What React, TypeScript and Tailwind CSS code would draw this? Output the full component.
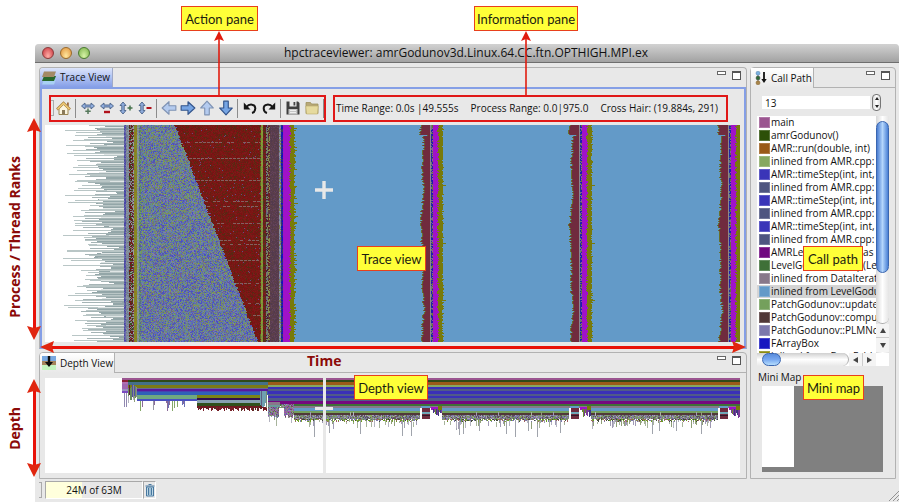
import { useMemo, type ReactNode } from "react";

type Layers = Map<string, string[]>;

const SKY = "#639ac8";
const MAROON = "#702b3e";
const PURPLE = "#a012c8";
const OLIVE = "#787a0a";

function makeRandom(seed: number) {
  let s = seed;
  return () => {
    s = (s * 1664525 + 1013904223) % 4294967296;
    return s / 4294967296;
  };
}

function painter() {
  const order: { fill: string; d: string[] }[] = [];
  const groups: Layers = new Map();
  const rect = (fill: string, x: number, y: number, w: number, h: number) => {
    if (w <= 0 || h <= 0) return;
    let d = groups.get(fill);
    if (!d) {
      d = [];
      groups.set(fill, d);
      order.push({ fill, d });
    }
    d.push(`M${x} ${y}h${w}v${h}h${-w}z`);
  };
  const flush = () => groups.clear();
  return { order, rect, flush };
}

function traceLayers() {
  const rnd = makeRandom(7);
  const pick = (c: string[]) => c[Math.floor(rnd() * c.length)];
  const { order, rect, flush } = painter();
  const H = 217;

  // idle spikes before start-up
  for (let y = 0; y < H; y++) {
    const group = Math.abs(((y + 4) % 18) - 9) * 2;
    const start = 46 + group + Math.round(rnd() * 10);
    rect("#93a6a8", start, y, 81 - start, 1);
    if (y % 5 === 0 || y % 7 === 0) rect("#b9c6c6", 18 + Math.round(rnd() * 28), y, 62, 1);
    else if (y % 3 === 0) rect("#a5b4b5", 36 + Math.round(rnd() * 20), y, 40, 1);
  }
  flush();
  for (let y = 2; y < H; y += 9) rect("#dfe5e5", 52 + Math.round(rnd() * 14), y, 27, 1);
  flush();

  // start-up stripes
  const strips: [number, number, string[]][] = [
    [79, 2, ["#4a45a8", "#5a58a0", "#6a6ab0"]],
    [81, 3, ["#7d8a98", "#8a949c", "#6f7a90"]],
    [84, 4, ["#5c1a22", "#38501c", "#7a6a70", "#7a1818", "#8a949c"]],
    [88, 1, ["#9a9aa0", "#6a3a50"]],
    [89, 3, ["#8a8a1c", "#7a8a30", "#8f7a20"]],
    [92, 2, ["#8a989c", "#7c8c90"]],
    [94, 2, ["#5c8a58", "#6a9a70", "#5858a0"]],
  ];
  for (const [x, w, colors] of strips)
    for (let i = 0; i < w; i++) for (let y = 0; y < H; y++) rect(pick(colors), x + i, y, 1, 1);
  flush();

  // AMR noise and the sloped solver front
  const cool = ["#4a4ec4", "#5a64c0", "#5058b4", "#5f74b0", "#66749a", "#7a7ab0", "#6a8a90", "#768f60", "#6482a0", "#74608c"];
  const green = ["#7f9c4c", "#6a9060", "#6f9a7a", "#84885a", "#5f8a98"];
  const warm = ["#7d1414", "#7d1414", "#80181a", "#781212", "#7a1a14", "#6c2014", "#542c12", "#6a1c14"];
  for (let y = 0; y < H; y++) {
    const front = Math.round(129 + (y * 83) / 217 + rnd() * 2);
    for (let x = 96; x < 215; x++) {
      if (x < front) rect(rnd() < 0.34 - y * 0.001 ? pick(green) : pick(cool), x, y, 1, 1);
      else rect(rnd() < 0.015 ? "#6a4a80" : pick(warm), x, y, 1, 1);
    }
  }
  flush();
  for (const y of [17, 33, 55, 76, 81, 98, 115, 119, 135, 158, 178, 190, 200])
    for (let x = 131 + Math.round((y * 83) / 217); x < 215; x += 4)
      if (rnd() < 0.7) rect("#846060", x, y, 3, 1);
  flush();

  const mid: [number, number, string[]][] = [
    [215, 1, ["#5a6a20", "#7a1818"]],
    [216, 2, ["#84962f", "#8a9a3c", "#7a8a40"]],
    [218, 3, ["#6a1820", "#7a1c1c", "#4a3a18"]],
    [221, 2, ["#7c8a60", "#6a6a80", "#4a2030"]],
    [223, 2, ["#6a2028", "#849048", "#5a3a40"]],
    [225, 9, ["#583c4c", "#583c4c", "#5e4048", "#523a4c", "#62425a"]],
    [234, 2, ["#8a92a0", "#707c98", "#7a7a50"]],
    [236, 2, ["#1414b4", "#2222a4", "#3a3a60"]],
  ];
  for (const [x, w, colors] of mid)
    for (let i = 0; i < w; i++) for (let y = 0; y < H; y++) rect(pick(colors), x + i, y, 1, 1);
  for (let y = 0; y < H; y++) {
    const split = 244 + Math.round(rnd() * 2);
    const end = 249 + Math.round(rnd() * rnd() * 4);
    rect(SKY, end, y, 695 - end, 1);
    rect(PURPLE, 238, y, split - 238, 1);
    rect(OLIVE, split, y, end - split, 1);
  }
  flush();

  // synchronisation bands
  for (const x0 of [384, 533, 682]) {
    for (let y = 0; y < H; y++) {
      const bulge = y < 10 ? -2 : Math.round(Math.sin(y / 9) * 0.8 + Math.sin(y / 23) * 0.8);
      const left = y === 10 ? x0 - 1 : x0 - 7 + bulge + Math.round(rnd() * 2);
      const split = x0 + 8 + Math.round(rnd() * 2);
      const end = Math.min(695, x0 + 13 + Math.round(rnd() + rnd() * rnd() * 1.6));
      rect("#66702c", left - 1, y, 1, 1);
      rect(MAROON, left, y, x0 + 1 - left, 1);
      rect("#8a8890", x0 + 1, y, 1, 1);
      rect(pick(["#1c1cae", "#2a2a9c", "#6a7a70"]), x0 + 2, y, 1, 1);
      rect(pick(["#1c1cae", "#66703a", "#8858a0"]), x0 + 3, y, 1, 1);
      rect(PURPLE, x0 + 4, y, split - x0 - 4, 1);
      rect(OLIVE, split, y, end - split, 1);
    }
    for (const y of [60, 118, 175]) rect(OLIVE, x0 + 12, y, x0 > 600 ? 1 : 5, 1);
  }
  return order;
}

function depthLayers() {
  const rnd = makeRandom(41);
  const pick = (c: string[]) => c[Math.floor(rnd() * c.length)];
  const { order, rect, flush } = painter();

  const row = (colors: [string, number, number][], x: number, w: number) =>
    colors.forEach(([c, y, h]) => rect(c, x, y, w, h));

  row([["#9b5590", 0, 2], ["#2f4a18", 2, 2]], 77, 618);
  row([["#8c1c34", 2, 2], ["#b070b0", 4, 2], ["#a068b0", 6, 5], ["#9a90c0", 11, 2], ["#7a4ac0", 13, 2]], 77, 6);
  row([["#447088", 4, 3], ["#7c7a14", 7, 3], ["#6a6a90", 10, 1], ["#5a189c", 11, 2], ["#4444b0", 13, 1], ["#3060b8", 14, 3]], 83, 140);
  row([["#70a880", 17, 4], ["#4a50c0", 21, 2]], 92, 60);
  row([["#7c8414", 17, 3], ["#30104c", 20, 2], ["#88a0b0", 22, 3], ["#30501c", 25, 3], ["#701820", 28, 2]], 152, 66);
  row([["#9a5a18", 4, 3], ["#86a860", 7, 2], ["#3a30b8", 9, 2], ["#505a88", 11, 2], ["#3a30b8", 13, 3], ["#505a88", 16, 2], ["#3a30b8", 18, 2], ["#505a88", 20, 3], ["#750880", 23, 3], ["#3f7038", 26, 2]], 223, 472);
  row([["#88788a", 28, 2], [SKY, 30, 3], ["#74a05c", 33, 2], ["#503838", 35, 2]], 249, 446);
  row([["#88788a", 24, 3], ["#6a9a98", 27, 2]], 223, 12);
  flush();

  const noise = ["#7c78ac", "#8a8498", "#6c5860", "#86a860", "#707088", "#a8a0b8", "#585060", "#74906c"];
  const tail = ["#a8b49c", "#a09ab4", "#b4b4c0", "#90a078"];
  // first phases
  for (let x = 83; x < 92; x++) {
    rect(pick(["#5a2030", "#6a8a60", "#5050a0", "#8a8a90"]), x, 6 + Math.floor(rnd() * 6), 1, 9 + Math.floor(rnd() * 5));
    if (rnd() < 0.5) rect(pick(tail), x, 18, 1, 4 + Math.floor(rnd() * 11));
  }
  for (const x of [79, 81]) rect("#9088b0", x, 15, 1, 14);
  for (let x = 92; x < 152; x++) {
    const cluster = x < 116 || (x > 120 && x < 145);
    if (cluster && rnd() < 0.36) rect(pick(["#8a6a98", "#84a868", "#6a70b8", "#9a9aa8"]), x, 23, 1, 2 + Math.floor(rnd() * 10));
  }
  for (let x = 152; x < 222; x++) {
    if (rnd() < 0.72) rect(pick(["#701820", "#782028", "#503020"]), x, 29, 1, 2 + Math.floor(rnd() * 3));
    if (x > 214) rect(pick(["#70a0b0", "#7a8a70", "#5c5c80"]), x, 13, 1, 12 + Math.floor(rnd() * 6));
  }
  for (let x = 223; x < 249; x++) {
    const top = x < 236 ? 29 : 26;
    const bottom = x > 233 && x < 239 ? 30 : 37 + Math.floor(rnd() * 4);
    for (let y = top; y < bottom; y++)
      rect(pick(["#6c5060", "#7a9a60", "#9a50b0", "#6868a8", "#8a9aa8", "#8a808c"]), x, y, 1, 1);
    if (bottom > 31 && rnd() < 0.3) rect(pick(tail), x, bottom, 1, Math.floor(rnd() * 11));
  }
  flush();

  // deepest frames and their tails
  for (let x = 249; x < 695; x++) {
    const floor = 42 + Math.floor(rnd() * 3);
    rect("#9a96a8", x, 37, 1, 4);
    for (let y = 37; y < floor; y++)
      rect(y > 40 ? pick(["#68a01c", "#80a040", "#404838", "#7c78ac", "#a06060", "#ffffff"]) : pick(noise), x, y, 1, 1);
    if (rnd() < 0.05) rect(pick(tail), x, 34, 1, 4);
    if (rnd() < 0.26) rect(pick(tail), x, floor, 1, 2 + Math.floor(rnd() * 6));
    if (rnd() < 0.05) rect("#a0a4ac", x, 42, 1, 8 + Math.floor(rnd() * 10));
  }
  flush();
  for (const x0 of [376, 525, 674]) {
    const w = Math.min(21, 695 - x0);
    rect("#ffffff", x0 - 1, 30, w + 1, 32);
    flush();
    rect("#88788a", x0, 28, w, 2);
    rect(SKY, x0, 28, 9, 2);
    rect(MAROON, x0 + 1, 30, 8, 11);
    flush();
    rect("#70a8b8", x0 + 1, 34, 8, 2);
    rect("#301828", x0 + 1, 37, 8, 1);
    rect(PURPLE, x0 + 10, 29, 9, 3);
    for (let x = x0 + 12; x < x0 + w; x++) rect(pick(["#6a8a30", "#7a3a98", "#403880"]), x, 31, 1, 3 + Math.floor(rnd() * 7));
    rect(OLIVE, x0 + 17, 28, Math.min(4, w - 17), 4);
  }
  return order;
}

function Drawing({ layers, height, label, cls }: { layers: { fill: string; d: string[] }[]; height: number; label: string; cls: string }) {
  return (
    <svg role="img" aria-label={label} viewBox={`0 0 695 ${height}`} preserveAspectRatio="none" shapeRendering="crispEdges" className={cls}>
      {layers.map((l, i) => (
        <path key={i} fill={l.fill} d={l.d.join("")} />
      ))}
    </svg>
  );
}

function Callout({ children, cls }: { children: ReactNode; cls: string }) {
  return (
    <div className={`absolute z-20 flex h-[25px] items-center justify-center whitespace-nowrap border border-[#e8401c] bg-[#ffff38] font-[Lato,sans-serif] text-[13px] leading-4 text-[#1c1c10] ${cls}`}>
      {children}
    </div>
  );
}

function UpArrow({ cls }: { cls: string }) {
  return (
    <svg viewBox="0 0 12 64" className={`absolute z-10 h-16 w-3 ${cls}`} aria-hidden="true">
      <path d="M6 8V64" stroke="#e01c10" strokeWidth="1.6" />
      <path d="M6 0L11 10L6 8L1 10Z" fill="#e01c10" />
    </svg>
  );
}

function VerticalAxis({ text, cls, textCls = "" }: { text: string; cls: string; textCls?: string }) {
  return (
    <div className={`absolute z-10 flex items-center gap-1 ${cls}`}>
      <span className={`w-4 rotate-180 text-center text-[14px] leading-4 font-bold whitespace-nowrap text-[#8b0a08] [writing-mode:vertical-rl] ${textCls}`}>{text}</span>
      <div className="flex h-full w-[14px] flex-col items-center">
        <svg viewBox="0 0 14 14" className="w-[14px] shrink-0" aria-hidden="true"><path d="M7 0L14 14L7 12L0 14Z" fill="#e0260f" /></svg>
        <div className="-my-0.5 w-[3px] flex-1 bg-[#e81208]" />
        <svg viewBox="0 0 14 14" className="w-[14px] shrink-0" aria-hidden="true"><path d="M7 14L14 0L7 2L0 0Z" fill="#e0260f" /></svg>
      </div>
    </div>
  );
}

function PaneButtons() {
  return (
    <div className="ml-auto flex items-start gap-1.5 pt-[3px] pr-[5px]">
      <button aria-label="Minimize" className="h-1 w-[9px] border border-[#666] bg-white" />
      <button aria-label="Maximize" className="h-[9px] w-[9px] border border-t-2 border-[#555] bg-white" />
    </div>
  );
}

function Arrow({ turn, pale }: { turn: string; pale?: boolean }) {
  return (
    <svg viewBox="0 0 14 14" className={`size-4 ${turn}`} aria-hidden="true">
      <path d="M1 5h6V1.5L13 7L7 12.5V9H1Z" fill={pale ? "#b4cbef" : "#76a5e4"} stroke={pale ? "#7f93b4" : "#33558c"} strokeWidth="1" strokeLinejoin="round" />
    </svg>
  );
}

function Zoom({ vertical, plus }: { vertical?: boolean; plus?: boolean }) {
  return (
    <svg viewBox="0 0 14 14" className="size-[14px]" aria-hidden="true">
      <path
        d={vertical ? "M4 1L7 4.500H5.200V9.500H7L4 13L1 9.500H2.800V4.500H1Z" : "M.5 5L4 2V4H10V2L13.500 5L10 8V6H4V8Z"}
        fill="#8facdc"
        stroke="#4a6288"
        strokeWidth=".9"
      />
      {vertical ? (
        plus ? <path d="M8.500 7H13.500M11 4.500V9.500" stroke="#46724c" strokeWidth="1.500" /> : <path d="M8.500 7H13.500" stroke="#b0121c" strokeWidth="2" />
      ) : plus ? (
        <path d="M7 7.500V13M4.300 10.300H9.700" stroke="#56785c" strokeWidth="1.500" />
      ) : (
        <path d="M4 11H10" stroke="#b0121c" strokeWidth="2.400" />
      )}
    </svg>
  );
}

function Undo({ redo }: { redo?: boolean }) {
  return (
    <svg viewBox="0 0 14 14" className={`size-[14px] ${redo ? "-scale-x-100" : ""}`} aria-hidden="true">
      <path d="M3.500 6C6 2.500 12.500 2.800 12.300 7.500C12.200 10 10.800 11.500 9 12" fill="none" stroke="#161616" strokeWidth="2" />
      <path d="M.8 1.500V8.500H7.500Z" fill="#161616" />
    </svg>
  );
}

function ToolButton({ label, children }: { label: string; children: ReactNode }) {
  return (
    <button aria-label={label} title={label} className="flex h-5 w-[19px] shrink-0 items-center justify-center">
      {children}
    </button>
  );
}

const Divider = () => <span className="mx-[2px] h-[19px] w-px shrink-0 bg-[#8c8c8c]" />;

function Toolbar() {
  return (
    <div className="relative flex h-[27px] w-[277px] shrink-0 items-center border-2 border-[#e01818] pb-px">
      <span className="h-4 w-[3px] shrink-0 border-y border-r border-[#aaa]" />
      <ToolButton label="Home">
        <svg viewBox="0 0 15 15" className="size-[15px]" aria-hidden="true">
          <path d="M3 7.500V13.500H12V7.500L7.500 3.500Z" fill="#fbf5df" stroke="#998552" />
          <path d="M1 8.500L7.500 2L14 8.500" fill="none" stroke="#a88240" strokeWidth="2.600" />
          <path d="M1.500 8.200L7.500 2.300L13.500 8.200" fill="none" stroke="#f0cc78" strokeWidth="1.600" />
          <path d="M6 9H9V13.500H6Z" fill="#8a7a5a" />
          <path d="M11 1.500H12.800V5.500L11 3.800Z" fill="#9a6a40" />
        </svg>
      </ToolButton>
      <Divider />
      <ToolButton label="Zoom in time"><Zoom plus /></ToolButton>
      <ToolButton label="Zoom out time"><Zoom /></ToolButton>
      <ToolButton label="Zoom in process"><Zoom vertical plus /></ToolButton>
      <ToolButton label="Zoom out process"><Zoom vertical /></ToolButton>
      <Divider />
      <ToolButton label="Left"><Arrow turn="rotate-180" pale /></ToolButton>
      <ToolButton label="Right"><Arrow turn="rotate-0" /></ToolButton>
      <ToolButton label="Up"><Arrow turn="-rotate-90" pale /></ToolButton>
      <ToolButton label="Down"><Arrow turn="rotate-90" /></ToolButton>
      <Divider />
      <ToolButton label="Undo"><Undo /></ToolButton>
      <ToolButton label="Redo"><Undo redo /></ToolButton>
      <Divider />
      <ToolButton label="Save">
        <svg viewBox="0 0 14 14" className="size-[14px]" aria-hidden="true">
          <path d="M.5.5H12L13.500 2V13.500H.5Z" fill="#3e3e3e" />
          <path d="M3.500 0H10.500V5.500H3.500Z" fill="#e8e8e8" />
          <path d="M7.500 1H9.300V4.500H7.500Z" fill="#444" />
          <path d="M2.500 8H11.500V13.500H2.500Z" fill="#c4c4c4" />
          <path d="M4 9.500H10M4 11.500H10" stroke="#eee" />
        </svg>
      </ToolButton>
      <ToolButton label="Open">
        <svg viewBox="0 0 14 14" className="size-[14px]" aria-hidden="true">
          <path d="M1 3V1.500H5.500L6.500 3H13V12.500H1Z" fill="#b8a878" stroke="#a0925c" strokeWidth=".8" />
          <path d="M.8 5H13.200L12.500 13H1.500Z" fill="#e6da9e" stroke="#b8aa6a" strokeWidth=".6" />
        </svg>
      </ToolButton>
      <Divider />
      <UpArrow cls="bottom-[25px] left-[162px]" />
      <Callout cls="bottom-[89px] left-[130px] w-[77px]">Action pane</Callout>
    </div>
  );
}

const FRAMES: [string, string][] = [
  ["main", "bg-[#9b5590]"],
  ["amrGodunov()", "bg-[#2d5008]"],
  ["AMR::run(double, int)", "bg-[#9a5a18]"],
  ["inlined from AMR.cpp:", "bg-[#86a860]"],
  ["AMR::timeStep(int, int,", "bg-[#3a35b8]"],
  ["inlined from AMR.cpp:", "bg-[#4e5580]"],
  ["AMR::timeStep(int, int,", "bg-[#3a35b8]"],
  ["inlined from AMR.cpp:", "bg-[#4e5580]"],
  ["AMR::timeStep(int, int,", "bg-[#3a35b8]"],
  ["inlined from AMR.cpp:", "bg-[#4e5580]"],
  ["AMRLevelPolytropGas", "bg-[#700880]"],
  ["LevelGodunov::step(Lev", "bg-[#3f7038]"],
  ["inlined from DataIterat", "bg-[#88788a]"],
  ["inlined from LevelGodu", "bg-[#639ac8]"],
  ["PatchGodunov::updateS", "bg-[#74a05c]"],
  ["PatchGodunov::comput", "bg-[#503838]"],
  ["PatchGodunov::PLMNor", "bg-[#7c78ac]"],
  ["FArrayBox", "bg-[#1818c0]"],
  ["inlined from BaseFabI", "bg-[#8a8a10]"],
];

function CallPathPane() {
  return (
    <section className="relative flex w-[146px] shrink-0 flex-col rounded-t-[4px] border border-[#b2b2b2]">
      <header className="flex h-[20px] border-b border-[#b2b2b2]">
        <h2 className="-mb-px flex w-[63px] items-center gap-1 border-r border-[#b2b2b2] bg-linear-to-b from-white to-[#e8e8e8] pl-1 text-[10px] whitespace-nowrap">
          <svg viewBox="0 0 12 14" className="h-[14px] w-3 shrink-0" aria-hidden="true">
            <path d="M3 2V12" stroke="#777" />
            <circle cx="3" cy="2.200" r="2" fill="#7ab0e0" stroke="#5580a8" strokeWidth=".5" />
            <circle cx="3" cy="7" r="2" fill="#2c6a34" stroke="#444" strokeWidth=".5" />
            <circle cx="3" cy="11.800" r="2" fill="#a88448" stroke="#80602c" strokeWidth=".5" />
            <path d="M9 1V10" stroke="#111" strokeWidth="1.800" />
            <path d="M6.300 8H11.700L9 12Z" fill="#111" />
          </svg>
          Call Path
        </h2>
        <PaneButtons />
      </header>
      <div className="flex items-center gap-0.5 pt-[6px] pl-[11px]">
        <input aria-label="Depth level" defaultValue="13" className="h-[13px] w-[108px] bg-white pl-[3px] text-[10px] leading-3 outline-none" />
        <div className="flex h-[17px] w-[9px] flex-col justify-between rounded-[4px] border border-[#777] bg-linear-to-r from-[#ddd] via-white to-[#ddd] py-[2px] text-[#222]">
          <button aria-label="Increase" className="flex justify-center"><svg viewBox="0 0 4 3" className="h-[3px] w-1"><path d="M2 0L4 3H0Z" fill="currentColor" /></svg></button>
          <button aria-label="Decrease" className="flex justify-center"><svg viewBox="0 0 4 3" className="h-[3px] w-1"><path d="M2 3L4 0H0Z" fill="currentColor" /></svg></button>
        </div>
      </div>
      <div className="mt-[5px] ml-[6px] flex h-[237px] w-[132px]">
        <ul className="flex-1 overflow-hidden bg-white">
          {FRAMES.map(([name, swatch], i) => (
            <li key={i} className={`flex h-[13px] items-center gap-px pl-0.5 text-[10px] leading-[13px] whitespace-nowrap ${i === 13 ? "bg-[#d4d4d4]" : ""}`}>
              <span className={`size-[11px] shrink-0 border border-white/20 ${swatch}`} />
              {name}
            </li>
          ))}
        </ul>
        <div className="flex w-[13px] flex-col bg-linear-to-r from-[#d8d8d8] via-white to-[#e4e4e4]">
          <div className="mt-[5px] h-[152px] rounded-full border border-[#3a66b0] bg-linear-to-r from-[#4a7cd0] via-[#b4d6fc] to-[#4a80d4]" />
          <div className="h-[51px] rounded-b-full border-b border-[#aaa]" />
          <button aria-label="Scroll up" className="flex h-[14px] items-center justify-center border-b border-[#ccc] bg-[#f4f4f4]"><svg viewBox="0 0 6 5" className="w-1.5"><path d="M3 0L6 5H0Z" fill="#444" /></svg></button>
          <button aria-label="Scroll down" className="flex h-[14px] items-center justify-center bg-[#f4f4f4]"><svg viewBox="0 0 6 5" className="w-1.5"><path d="M3 5L6 0H0Z" fill="#444" /></svg></button>
        </div>
      </div>
      <div className="ml-[6px] flex h-[13px] w-[132px] bg-white">
        <div className="flex w-[92px] rounded-r-full border-r border-[#aaa] bg-linear-to-b from-[#d0d0d0] via-white to-[#e8e8e8] pl-[5px]">
          <div className="w-[19px] rounded-full border border-[#3a66b0] bg-linear-to-b from-[#5a8cdc] via-[#78a8f0] to-[#b4dcfc]" />
        </div>
        <button aria-label="Scroll left" className="flex w-[14px] items-center justify-center border-r border-[#ccc] bg-[#f4f4f4]"><svg viewBox="0 0 5 6" className="h-1.5"><path d="M0 3L5 0V6Z" fill="#444" /></svg></button>
        <button aria-label="Scroll right" className="flex w-[13px] items-center justify-center bg-[#f4f4f4]"><svg viewBox="0 0 5 6" className="h-1.5"><path d="M5 3L0 0V6Z" fill="#444" /></svg></button>
      </div>
      <h3 className="mt-[3px] ml-[7px] text-[10px] leading-4">Mini Map</h3>
      <div className="mt-px ml-[11px] h-[86px] w-[121px] bg-[#808080]">
        <div className="h-[81px] w-8 bg-white" />
      </div>
      <Callout cls="top-[178px] right-[32px] w-[60px]">Call path</Callout>
      <Callout cls="top-[307px] right-[31px] w-[61px]">Mini map</Callout>
    </section>
  );
}

function Light({ cls, label }: { cls: string; label: string }) {
  return <button className={`size-3 rounded-full border ${cls}`} aria-label={label} />;
}

export default function App() {
  const trace = useMemo(traceLayers, []);
  const depth = useMemo(depthLayers, []);
  return (
    <main className="overflow-hidden bg-white pt-11 pr-px pl-[35px] font-['Open_Sans',sans-serif] text-[#111]">
      <div className="rounded-t-[4px] bg-[#e8e8e8]">
        <div className="relative flex h-[19px] items-center gap-1.5 rounded-t-[4px] border-b border-[#6e6e6e] bg-linear-to-b from-[#d2d2d2] to-[#a2a2a2] pl-[7px]">
          <Light label="Close window" cls="border-[#8a3a3a] bg-radial-[at_50%_80%] from-[#ffb0a8] to-[#c8303a]" />
          <Light label="Minimize window" cls="border-[#9a6a2a] bg-radial-[at_50%_80%] from-[#ffe8a0] to-[#e09038]" />
          <Light label="Zoom window" cls="border-[#4a7a30] bg-radial-[at_50%_80%] from-[#d8f4a8] to-[#78b048]" />
          <h1 className="flex-1 pr-[63px] text-center text-[12px] leading-4">hpctraceviewer: amrGodunov3d.Linux.64.CC.ftn.OPTHIGH.MPI.ex</h1>
        </div>
        <div className="flex gap-[3px] pt-1 pr-[3px] pl-1">
          <div className="flex min-w-0 flex-1 flex-col gap-[3px]">
            <section className="relative rounded-t-[4px] border border-[#b2b2b2] border-b-[#8ca4e4]">
              <header className="flex h-[19px]">
                <h2 className="flex w-[73px] items-center gap-1 rounded-tl-[3px] border-r border-[#a0aac8] bg-linear-to-b from-[#dce4fa] to-[#869fe8] pl-[2px] text-[10px] whitespace-nowrap">
                  <svg viewBox="0 0 14 14" className="size-[14px] shrink-0" aria-hidden="true">
                    <path d="M2 8.500H14L12 13.500H0Z" fill="#a8d0f4" />
                    <path d="M2 5H14L12 10H0Z" fill="#28682c" />
                    <path d="M2 .5H14L12 6H0Z" fill="#a38a66" />
                  </svg>
                  Trace View
                </h2>
                <PaneButtons />
              </header>
              <div className="border-2 border-[#859fe6] pt-[6px] pr-1 pb-[4px] pl-[3px]">
                <div className="ml-1 flex gap-[7px]">
                  <Toolbar />
                  <div className="relative flex h-[27px] w-[395px] items-center gap-[12px] border-2 border-[#e01818] pb-[2px] pl-px text-[10px] leading-4 whitespace-nowrap">
                    <span>Time Range: 0.0s |49.555s</span>
                    <span>Process Range: 0.0|975.0</span>
                    <span>Cross Hair: (19.884s, 291)</span>
                    <UpArrow cls="bottom-[25px] left-[185px]" />
                    <Callout cls="bottom-[89px] left-[139px] w-[104px]">Information pane</Callout>
                  </div>
                </div>
                <div className="relative mt-[3px] bg-white">
                  <Drawing layers={trace} height={217} label="Trace of process ranks over time" cls="block h-[217px] w-full" />
                  <svg viewBox="0 0 18 18" className="absolute top-14 left-[270px] size-[18px]" aria-hidden="true">
                    <path d="M9 0V18M0 9H18" stroke="#e8e8e8" strokeWidth="3.400" />
                  </svg>
                  <Callout cls="top-[121px] left-[312px] w-[69px]">Trace view</Callout>
                </div>
              </div>
              <VerticalAxis text="Process / Thread Ranks" textCls="mt-4" cls="top-[50px] -left-[33px] h-[222px]" />
              <div className="absolute right-0 -bottom-[5px] left-0 z-10 flex h-3 items-center">
                <svg viewBox="0 0 14 12" className="w-[14px] shrink-0" aria-hidden="true"><path d="M0 6L14 0L12 6L14 12Z" fill="#e0260f" /></svg>
                <div className="-mx-0.5 h-[3px] flex-1 bg-[#e81208]" />
                <svg viewBox="0 0 14 12" className="w-[14px] shrink-0" aria-hidden="true"><path d="M14 6L0 0L2 6L0 12Z" fill="#e0260f" /></svg>
              </div>
            </section>

            <section className="relative rounded-t-[4px] border border-[#b2b2b2]">
              <header className="flex h-[20px] border-b border-[#b2b2b2]">
                <h2 className="-mb-px flex w-[75px] items-center gap-1 rounded-tl-[3px] border-r border-[#b2b2b2] bg-linear-to-b from-white to-[#e8e8e8] pl-[2px] text-[10px] whitespace-nowrap">
                  <svg viewBox="0 0 14 14" className="size-[14px] shrink-0" aria-hidden="true">
                    <path d="M0 0H14V5H0Z" fill="#78a8e0" />
                    <path d="M0 5H14V9H0Z" fill="#a5845c" />
                    <path d="M0 9H14V14H0Z" fill="#c4f4c0" />
                    <path d="M5.800 0H8.200V6H11L7 11L3 6H5.800Z" fill="#0c0c0c" />
                  </svg>
                  Depth View
                </h2>
                <PaneButtons />
              </header>
              <span className="absolute top-0 left-[267px] text-[14px] leading-4 font-bold text-[#8b0a08]">Time</span>
              <div className="py-[5px] pr-[6px] pl-[5px]">
                <div className="relative bg-white">
                  <Drawing layers={depth} height={95} label="Call depth over time" cls="block h-[95px] w-full" />
                  <div className="absolute inset-y-0 left-[278px] w-[3px] bg-[#e8e8e8]" />
                  <div className="absolute top-[29px] left-[270px] h-[3px] w-[18px] bg-[#e8e8e8]" />
                  <Callout cls="-top-[3px] left-[309px] w-[74px]">Depth view</Callout>
                </div>
              </div>
              <VerticalAxis text="Depth" cls="top-[26px] -left-[33px] h-[98px]" />
            </section>
          </div>
          <CallPathPane />
        </div>
        <footer className="flex h-[23px] items-start pt-[2px] pl-1">
          <span className="mt-px mr-[3px] h-4 w-[3px] border-y border-r border-[#aaa]" />
          <div className="flex h-[18px] w-[98px] border border-[#a8a8a8] border-r-white border-b-white bg-linear-to-r from-[#ffffdc] from-38% to-[#e8e8e8] to-38%">
            <span className="flex-1 text-center text-[10px] leading-4">24M of 63M</span>
          </div>
          <button aria-label="Run garbage collector" className="flex h-[18px] w-[13px] items-center justify-center border border-[#a8a8a8] border-r-white border-b-white">
            <svg viewBox="0 0 10 14" className="h-[14px] w-[10px] shrink-0" aria-hidden="true">
              <path d="M1.500 4H8.500V13H1.500Z" fill="#bcd6e4" stroke="#4878a0" />
              <path d="M.5 3H9.500M3.500 1.500H6.500M3.600 5V12M6.400 5V12" stroke="#4878a0" strokeWidth="1.200" />
            </svg>
          </button>
          <svg viewBox="0 0 10 10" className="mt-[10px] ml-auto size-[10px]" aria-hidden="true">
            <path d="M0 10L10 0M4 10L10 4M8 10L10 8" stroke="#888" strokeWidth=".9" />
          </svg>
        </footer>
      </div>
    </main>
  );
}
